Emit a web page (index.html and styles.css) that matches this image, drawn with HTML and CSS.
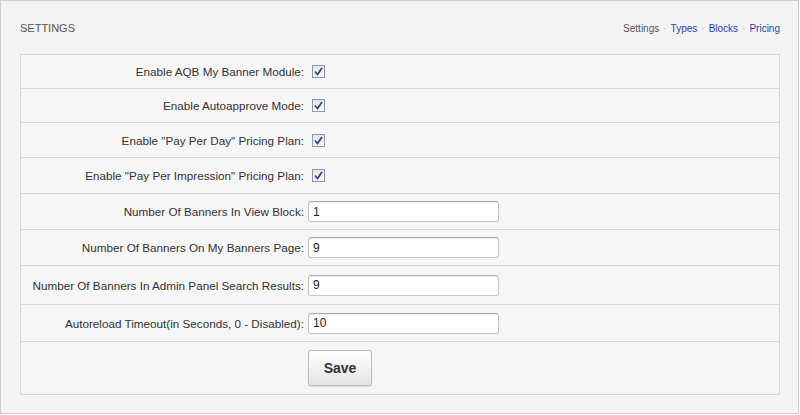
FILE: index.html
```html
<!DOCTYPE html>
<html>
<head>
<meta charset="utf-8">
<link rel="stylesheet" href="styles.css">
</head>
<body>
<div class="frame">
  <div class="header">
    <div class="title">SETTINGS</div>
    <div class="nav">
      <span class="current">Settings</span><span class="sep">·</span><a href="#">Types</a><span class="sep">·</span><a href="#">Blocks</a><span class="sep">·</span><a href="#">Pricing</a>
    </div>
  </div>
  <div class="table">
    <div class="row r34">
      <div class="label">Enable AQB My Banner Module:</div>
      <div class="ctrl"><span class="cb"><svg width="9" height="9" viewBox="0 0 9 9"><path d="M1 4.5 L3.5 7.5 L8 1" fill="none" stroke="#2a4a85" stroke-width="1.7"/></svg></span></div>
    </div>
    <div class="row r34">
      <div class="label">Enable Autoapprove Mode:</div>
      <div class="ctrl"><span class="cb"><svg width="9" height="9" viewBox="0 0 9 9"><path d="M1 4.5 L3.5 7.5 L8 1" fill="none" stroke="#2a4a85" stroke-width="1.7"/></svg></span></div>
    </div>
    <div class="row r35">
      <div class="label">Enable "Pay Per Day" Pricing Plan:</div>
      <div class="ctrl"><span class="cb"><svg width="9" height="9" viewBox="0 0 9 9"><path d="M1 4.5 L3.5 7.5 L8 1" fill="none" stroke="#2a4a85" stroke-width="1.7"/></svg></span></div>
    </div>
    <div class="row r36">
      <div class="label">Enable "Pay Per Impression" Pricing Plan:</div>
      <div class="ctrl"><span class="cb"><svg width="9" height="9" viewBox="0 0 9 9"><path d="M1 4.5 L3.5 7.5 L8 1" fill="none" stroke="#2a4a85" stroke-width="1.7"/></svg></span></div>
    </div>
    <div class="row r36">
      <div class="label">Number Of Banners In View Block:</div>
      <div class="ctrl"><input class="txt" type="text" value="1"></div>
    </div>
    <div class="row r36">
      <div class="label">Number Of Banners On My Banners Page:</div>
      <div class="ctrl"><input class="txt" type="text" value="9"></div>
    </div>
    <div class="row r39">
      <div class="label">Number Of Banners In Admin Panel Search Results:</div>
      <div class="ctrl"><input class="txt" type="text" value="9"></div>
    </div>
    <div class="row r37">
      <div class="label">Autoreload Timeout(in Seconds, 0 - Disabled):</div>
      <div class="ctrl"><input class="txt" type="text" value="10"></div>
    </div>
    <div class="row last">
      <div class="label"></div>
      <div class="ctrl"><button class="btn" type="button">Save</button></div>
    </div>
  </div>
</div>
</body>
</html>
```

FILE: styles.css
```css
* { box-sizing: border-box; }
html, body { margin: 0; padding: 0; background: #ffffff; }
body { font-family: "Liberation Sans", Arial, sans-serif; color: #333; }

.frame {
  width: 799px;
  height: 414px;
  border: 1px solid #cfcfcf;
  background: #f4f4f4;
  padding: 0 18px 0 19px;
}

.header {
  height: 53px;
  display: flex;
  align-items: center;
  justify-content: space-between;
  padding-top: 1px;
}
.title {
  font-size: 11px;
  color: #555;
}
.nav {
  font-size: 10px;
  color: #555;
}
.nav a { color: #2b3fb0; text-decoration: none; }
.nav .current { color: #555; }
.nav .sep { color: #b0b0b0; margin: 0 4px; }

.table {
  border: 1px solid #d8d8d8;
  background: #f6f6f6;
  width: 760px;
}
.row {
  display: flex;
  align-items: center;
  border-bottom: 1px solid #d8d8d8;
}
.row.last { border-bottom: none; height: 52px; align-items: flex-start; padding-top: 8px; }
.r34 { height: 34px; }
.r35 { height: 35px; }
.r36 { height: 36px; }
.r37 { height: 37px; }
.r39 { height: 39px; }

.label {
  width: 285px;
  flex: none;
  text-align: right;
  font-size: 11.7px;
  color: #333;
  padding-right: 2px;
}
.ctrl {
  flex: 1;
  display: flex;
  align-items: center;
  padding-left: 2px;
}
.cb {
  margin-left: 4px;
  width: 13px;
  height: 13px;
  border: 1px solid #8e98a4;
  background: linear-gradient(#e2e5ea, #fbfbfb);
  display: flex;
  align-items: center;
  justify-content: center;
}
.txt {
  width: 191px;
  height: 21px;
  border: 1px solid #c4c4c4;
  border-top-color: #a9a9a9;
  border-radius: 3px;
  background: #fff;
  box-shadow: inset 0 1px 1px rgba(0,0,0,0.08);
  font-family: "Liberation Sans", Arial, sans-serif;
  font-size: 12px;
  color: #222;
  padding: 0 4px;
  margin: 0;
  outline: none;
}
.btn {
  width: 64px;
  height: 36px;
  border: 1px solid #bdbdbd;
  border-radius: 3px;
  background: linear-gradient(#fdfdfd, #e6e6e6);
  box-shadow: 0 1px 1px rgba(0,0,0,0.12);
  font-family: "Liberation Sans", Arial, sans-serif;
  font-weight: bold;
  font-size: 14px;
  color: #333;
  padding: 0;
  margin: 0;
}
```
